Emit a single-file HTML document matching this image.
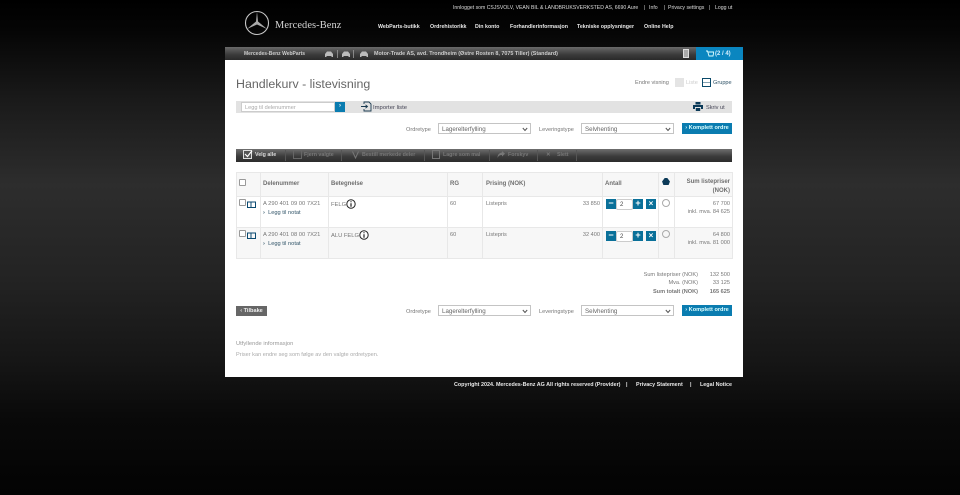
<!DOCTYPE html>
<html><head><meta charset="utf-8"><style>
*{box-sizing:border-box}
html,body{margin:0;padding:0}
body{width:960px;height:495px;overflow:hidden;position:relative;font-family:"Liberation Sans",sans-serif;background:linear-gradient(180deg,#000 0,#050505 30px,#1a1a1a 100px,#2d2d2d 185px,#232323 280px,#161616 360px,#090909 420px,#030303 495px)}
#p{position:absolute;left:0;top:0;width:960px;height:495px;filter:blur(.35px)}
.a{position:absolute;white-space:nowrap}
.w{color:#e8e8e8;font-size:5.3px;font-weight:bold}
.g{color:#777;font-size:5.6px;margin-top:1px}
.sel{position:absolute;height:11px;background:#fff;border:1px solid #c4c4c4;font-size:6.2px;color:#666;padding:2px 0 0 3px;line-height:7px}
.sel svg{position:absolute;right:2px;top:3px}
.blue{position:absolute;background:#0a7cb0;color:#dff;font-size:5.6px;font-weight:bold;text-align:center}
.q{position:absolute;width:10px;height:10px;background:#0a7099;color:#fff;font-size:9px;line-height:9px;font-weight:bold;text-align:center}
.cb{position:absolute;width:7px;height:7px;border:1px solid #999;background:#fff;border-radius:1px}
.bt{color:#777;font-size:5.3px;font-weight:bold;margin-top:1px}
.hd{color:#6f6f6f;font-size:6px;font-weight:bold;margin-top:1px}
.v{position:absolute;width:1px;background:#e8e8e8}
.h{position:absolute;height:1px;background:#e8e8e8;left:236px;width:496px}
.s{position:absolute;top:150px;width:1px;height:11px;background:#555}
.inp{position:absolute;width:17px;height:11px;background:#fff;border:1px solid #ccc;border-radius:2px;font-size:6px;color:#444;padding:1px 0 0 3px;line-height:8px}
</style></head><body><div id="p">

<svg class="a" style="left:244px;top:10px" width="26" height="26" viewBox="0 0 26 26" fill="none" stroke="#c8c8c8"><circle cx="13" cy="13" r="11.5" stroke-width="1.1"/><path d="M13 1.5 14 11.5 23 19 13 14.5 3 19 12 11.5Z" fill="#aaa" stroke="none"/></svg>
<div class="a" style="left:275px;top:20px;font:10.4px 'Liberation Serif',serif;color:#d5d5d5;letter-spacing:.1px">Mercedes-Benz</div>

<div class="a" style="left:453px;top:5px;font-size:5.15px;color:#ddd;line-height:7px">Innlogget som CSJSVOLV, VEAN BIL &amp; LANDBRUKSVERKSTED AS, 6690 Aure</div>
<div class="a" style="left:644px;top:5px;font-size:5px;color:#ddd;line-height:7px">|</div>
<div class="a" style="left:649px;top:5px;font-size:5.2px;color:#ddd;line-height:7px">Info</div>
<div class="a" style="left:664px;top:5px;font-size:5px;color:#ddd;line-height:7px">|</div>
<div class="a" style="left:668px;top:5px;font-size:5.2px;color:#ddd;line-height:7px">Privacy settings</div>
<div class="a" style="left:709px;top:5px;font-size:5px;color:#ddd;line-height:7px">|</div>
<div class="a" style="left:715px;top:5px;font-size:5.2px;color:#ddd;line-height:7px">Logg ut</div>

<div class="a w" style="left:378px;top:23px;line-height:8px">WebParts-butikk</div>
<div class="a w" style="left:430px;top:23px;line-height:8px">Ordrehistorikk</div>
<div class="a w" style="left:475px;top:23px;line-height:8px">Din konto</div>
<div class="a w" style="left:510px;top:23px;line-height:8px">Forhandlerinformasjon</div>
<div class="a w" style="left:577px;top:23px;line-height:8px">Tekniske opplysninger</div>
<div class="a w" style="left:644px;top:23px;line-height:8px">Online Help</div>

<!-- top bar -->
<div class="a" style="left:225px;top:47px;width:517px;height:13px;background:linear-gradient(180deg,#6a6a6a,#3a3a3a 60%,#2a2a2a)"></div>
<div class="a" style="left:244px;top:51px;font-size:5px;font-weight:bold;color:#ccc;line-height:7px">Mercedes-Benz WebParts</div>
<svg class="a" style="left:324px;top:50px" width="46" height="8" viewBox="0 0 46 8" fill="#bbb"><path d="M1 7V4L3 1.5H7L9 4V7H7.500V6H2.500V7Z"/><rect x="13" y="0" width=".8" height="8" fill="#999"/><path d="M18 7V4L20 1.500H24L26 4V7H24.500V6H19.500V7Z"/><rect x="29" y="0" width=".8" height="8" fill="#999"/><path d="M36 7V4L38 1.500H42L44 4V7H42.500V6H37.500V7Z"/></svg>
<div class="a" style="left:374px;top:51px;font-size:5.4px;font-weight:bold;color:#ccc;line-height:7px">Motor-Trade AS, avd. Trondheim (Østre Rosten 8, 7075 Tiller) (Standard)</div>
<div class="a" style="left:683px;top:49px;width:6px;height:9px;background:#aaa;border:1px solid #ddd"></div>
<div class="a" style="left:696px;top:47px;width:47px;height:13px;background:#0a86c0"></div>
<svg class="a" style="left:706px;top:50px" width="8" height="8" viewBox="0 0 8 8" fill="none" stroke="#dff" stroke-width=".9"><path d="M0 1H1.500L3 6H7L7.800 2H2"/></svg>
<div class="a" style="left:715px;top:51px;font-size:6px;font-weight:bold;color:#d5f0ff;line-height:7px">(2 / 4)</div>

<!-- main -->
<div class="a" style="left:225px;top:60px;width:518px;height:317px;background:#fff"></div>
<div class="a" style="left:236px;top:76px;font-size:12.4px;color:#666;line-height:17px">Handlekurv - listevisning</div>

<div class="a g" style="left:635px;top:78px;line-height:8px">Endre visning</div>
<div class="a" style="left:675px;top:78px;width:9px;height:9px;background:#e4e4e4"></div>
<div class="a g" style="left:686px;top:78px;color:#ccc;line-height:8px">Liste</div>
<div class="a" style="left:702px;top:78px;width:9px;height:9px;border:1px solid #0b4a6a;background:linear-gradient(#fff 40%,#0b4a6a 40%,#0b4a6a 50%,#fff 50%)"></div>
<div class="a g" style="left:713px;top:78px;color:#33566a;line-height:8px">Gruppe</div>

<div class="a" style="left:236px;top:101px;width:496px;height:12px;background:#e2e2e2"></div>
<div class="a" style="left:241px;top:102px;width:94px;height:10px;background:#fff;border:1px solid #ccc;font-size:5.6px;color:#aaa;padding:2px 0 0 3px;line-height:6px">Legg til delenummer</div>
<div class="a" style="left:335px;top:102px;width:10px;height:10px;background:#0a7cb0;color:#fff;font-size:6px;text-align:center;line-height:9px;font-weight:bold">›</div>
<svg class="a" style="left:361px;top:101px" width="11" height="11" viewBox="0 0 11 11" fill="none" stroke="#1a3a50" stroke-width=".9"><path d="M3 3V1H8L10 3V10H3V8"/><path d="M0 5.500H6M4.500 3.800 6.500 5.500 4.500 7.200"/></svg>
<div class="a g" style="left:373px;top:102.500px;color:#445;line-height:8px;font-size:5.9px">Importer liste</div>
<svg class="a" style="left:693px;top:102px" width="10" height="9" viewBox="0 0 10 9" fill="#0b3a58"><path d="M2.500 0H7.500V2.500H2.500ZM0 3H10V7H8V5H2V7H0ZM2.800 6H7.200V9H2.800Z"/></svg>
<div class="a g" style="left:706px;top:102.500px;color:#445;line-height:8px">Skriv ut</div>

<!-- order row 1 -->
<div class="a g" style="left:406px;top:124.500px;line-height:8px">Ordretype</div>
<div class="sel" style="left:438px;top:123px;width:93px">Lagerelterfylling<svg width="6" height="5" viewBox="0 0 6 5" fill="none" stroke="#555"><path d="M.8 1 3 3.500 5.200 1"/></svg></div>
<div class="a g" style="left:539px;top:124.500px;line-height:8px">Leveringstype</div>
<div class="sel" style="left:581px;top:123px;width:93px">Selvhenting<svg width="6" height="5" viewBox="0 0 6 5" fill="none" stroke="#555"><path d="M.8 1 3 3.500 5.200 1"/></svg></div>
<div class="blue" style="left:682px;top:123px;width:50px;height:11px;line-height:11px">› Komplett ordre</div>

<!-- toolbar -->
<div class="a" style="left:236px;top:149px;width:496px;height:12.500px;background:linear-gradient(180deg,#6e6e6e,#3c3c3c 55%,#2c2c2c)"></div>
<div class="a" style="left:243px;top:150px;width:9px;height:9px;border:1px solid #ddd;background:#555"></div>
<svg class="a" style="left:244px;top:150px" width="9" height="8" viewBox="0 0 9 8" fill="none" stroke="#fff" stroke-width="1.200"><path d="M1 4 3.500 6.500 8 .8"/></svg>
<div class="a" style="left:255px;top:152px;font-size:5.3px;font-weight:bold;color:#ddd;line-height:7px">Velg alle</div>
<div class="s" style="left:285px"></div>
<div class="a" style="left:293px;top:150px;width:9px;height:9px;border:1px solid #666"></div>
<div class="a bt" style="left:304px;top:151px;line-height:7px">Fjern valgte</div>
<div class="s" style="left:341px"></div>
<svg class="a" style="left:352px;top:151px" width="7" height="8" viewBox="0 0 7 8" fill="none" stroke="#777"><path d="M.5 .5 3.500 7 6.500 .5"/></svg>
<div class="a bt" style="left:362px;top:151px;line-height:7px">Bestill merkede deler</div>
<div class="s" style="left:424px"></div>
<div class="a" style="left:432px;top:150px;width:8px;height:9px;border:1px solid #777"></div>
<div class="a bt" style="left:443px;top:151px;line-height:7px">Lagre som mal</div>
<div class="s" style="left:489px"></div>
<svg class="a" style="left:497px;top:151px" width="8" height="7" viewBox="0 0 8 7" fill="#777"><path d="M5 0 8 2.800 5 5.500V4C3 4 1.500 4.500.5 7 .5 3.500 2.500 1.800 5 1.500Z"/></svg>
<div class="a bt" style="left:508px;top:151px;line-height:7px">Forskyv</div>
<div class="s" style="left:537px"></div>
<div class="a bt" style="left:546px;top:151px;line-height:7px">✕</div>
<div class="a bt" style="left:557px;top:151px;line-height:7px">Slett</div>
<div class="s" style="left:576px"></div>

<!-- table -->
<div class="a" style="left:236px;top:172px;width:496px;height:25px;background:#f7f7f7"></div>
<div class="a" style="left:236px;top:227px;width:496px;height:31px;background:#f7f7f7"></div>
<div class="h" style="top:172px"></div><div class="h" style="top:196px"></div><div class="h" style="top:227px"></div><div class="h" style="top:258px"></div>
<div class="v" style="left:236px;top:172px;height:87px"></div>
<div class="v" style="left:260px;top:172px;height:87px"></div>
<div class="v" style="left:328px;top:172px;height:87px"></div>
<div class="v" style="left:447px;top:172px;height:87px"></div>
<div class="v" style="left:482px;top:172px;height:87px"></div>
<div class="v" style="left:602px;top:172px;height:87px"></div>
<div class="v" style="left:658px;top:172px;height:87px"></div>
<div class="v" style="left:674px;top:172px;height:87px"></div>
<div class="v" style="left:732px;top:172px;height:87px"></div>

<div class="cb" style="left:239px;top:179px"></div>
<div class="a hd" style="left:263px;top:179px;line-height:8px">Delenummer</div>
<div class="a hd" style="left:331px;top:179px;line-height:8px">Betegnelse</div>
<div class="a hd" style="left:450px;top:179px;line-height:8px">RG</div>
<div class="a hd" style="left:486px;top:179px;line-height:8px">Prising (NOK)</div>
<div class="a hd" style="left:605px;top:179px;line-height:8px">Antall</div>
<svg class="a" style="left:662px;top:178px" width="8" height="7" viewBox="0 0 9 8" fill="#0b3a58"><path d="M3 0H6L9 4 7.500 8H1.500L0 4Z"/></svg>
<div class="a hd" style="left:676px;top:177px;width:54px;text-align:right;line-height:8.500px;white-space:normal">Sum listepriser (NOK)</div>

<!-- row 1 -->
<div class="cb" style="left:239px;top:199px"></div>
<svg class="a" style="left:247px;top:201px" width="9" height="7" viewBox="0 0 9 7" fill="none" stroke="#0b4a70"><path d="M.5 1H4V6.500H.5ZM4 1H8.500V6.500H4Z"/></svg>
<div class="a g" style="left:263px;top:199px;line-height:8px;font-size:5.8px">A 290 401 09 00 7X21</div>
<div class="a" style="left:263px;top:209px;font-size:5.7px;color:#33566a;line-height:8px"><b>›</b>&nbsp; Legg til notat</div>
<div class="a g" style="left:331px;top:200px;line-height:8px;font-size:5.8px">FELG</div>
<svg class="a" style="left:346px;top:199px" width="10" height="10" viewBox="0 0 10 10"><circle cx="5" cy="5" r="4.200" fill="#fff" stroke="#222" stroke-width="1"/><path d="M5 2.200V3.300M5 4.200V7.800" stroke="#222" stroke-width="1.200"/></svg>
<div class="a g" style="left:450px;top:199px;line-height:8px">60</div>
<div class="a g" style="left:486px;top:199px;line-height:8px">Listepris</div>
<div class="a g" style="left:560px;top:199px;width:40px;text-align:right;line-height:8px">33 850</div>
<div class="q" style="left:606px;top:199px">−</div><div class="inp" style="left:616px;top:199px">2</div><div class="q" style="left:633px;top:199px">+</div><div class="q" style="left:646px;top:199px;font-size:8px">×</div>
<div class="a" style="left:662px;top:199px;width:8px;height:8px;border:1px solid #aaa;border-radius:50%"></div>
<div class="a g" style="left:676px;top:199px;width:54px;text-align:right;line-height:8px">67 700</div>
<div class="a g" style="left:676px;top:207px;width:54px;text-align:right;line-height:8px">inkl. mva. 84 625</div>

<!-- row 2 -->
<div class="cb" style="left:239px;top:230px"></div>
<svg class="a" style="left:247px;top:232px" width="9" height="7" viewBox="0 0 9 7" fill="none" stroke="#0b4a70"><path d="M.5 1H4V6.500H.5ZM4 1H8.500V6.500H4Z"/></svg>
<div class="a g" style="left:263px;top:230px;line-height:8px;font-size:5.8px">A 290 401 08 00 7X21</div>
<div class="a" style="left:263px;top:240px;font-size:5.7px;color:#33566a;line-height:8px"><b>›</b>&nbsp; Legg til notat</div>
<div class="a g" style="left:331px;top:231px;line-height:8px;font-size:5.8px">ALU FELG</div>
<svg class="a" style="left:359px;top:230px" width="10" height="10" viewBox="0 0 10 10"><circle cx="5" cy="5" r="4.200" fill="#fff" stroke="#222" stroke-width="1"/><path d="M5 2.200V3.300M5 4.200V7.800" stroke="#222" stroke-width="1.200"/></svg>
<div class="a g" style="left:450px;top:230px;line-height:8px">60</div>
<div class="a g" style="left:486px;top:230px;line-height:8px">Listepris</div>
<div class="a g" style="left:560px;top:230px;width:40px;text-align:right;line-height:8px">32 400</div>
<div class="q" style="left:606px;top:231px">−</div><div class="inp" style="left:616px;top:231px">2</div><div class="q" style="left:633px;top:231px">+</div><div class="q" style="left:646px;top:231px;font-size:8px">×</div>
<div class="a" style="left:662px;top:230px;width:8px;height:8px;border:1px solid #aaa;border-radius:50%"></div>
<div class="a g" style="left:676px;top:230px;width:54px;text-align:right;line-height:8px">64 800</div>
<div class="a g" style="left:676px;top:238px;width:54px;text-align:right;line-height:8px">inkl. mva. 81 000</div>

<!-- totals -->
<div class="a g" style="left:620px;top:270px;width:78px;text-align:right;line-height:8px">Sum listepriser (NOK)</div>
<div class="a g" style="left:700px;top:270px;width:30px;text-align:right;line-height:8px">132 500</div>
<div class="a g" style="left:620px;top:278px;width:78px;text-align:right;line-height:8px">Mva. (NOK)</div>
<div class="a g" style="left:700px;top:278px;width:30px;text-align:right;line-height:8px">33 125</div>
<div class="a g" style="left:620px;top:287px;width:78px;text-align:right;line-height:8px;font-weight:bold">Sum totalt (NOK)</div>
<div class="a g" style="left:700px;top:287px;width:30px;text-align:right;line-height:8px;font-weight:bold">165 625</div>

<!-- order row 2 -->
<div class="a" style="left:236px;top:306px;width:31px;height:10px;background:#666;color:#eee;font-size:5.6px;font-weight:bold;text-align:center;line-height:10px">‹ Tilbake</div>
<div class="a g" style="left:406px;top:306.500px;line-height:8px">Ordretype</div>
<div class="sel" style="left:438px;top:305px;width:93px">Lagerelterfylling<svg width="6" height="5" viewBox="0 0 6 5" fill="none" stroke="#555"><path d="M.8 1 3 3.500 5.200 1"/></svg></div>
<div class="a g" style="left:539px;top:306.500px;line-height:8px">Leveringstype</div>
<div class="sel" style="left:581px;top:305px;width:93px">Selvhenting<svg width="6" height="5" viewBox="0 0 6 5" fill="none" stroke="#555"><path d="M.8 1 3 3.500 5.200 1"/></svg></div>
<div class="blue" style="left:682px;top:305px;width:50px;height:11px;line-height:11px">› Komplett ordre</div>

<div class="a" style="left:236px;top:340px;font-size:5.8px;color:#999;line-height:8px">Utfyllende informasjon</div>
<div class="a" style="left:236px;top:351px;font-size:5.6px;color:#aaa;line-height:8px">Priser kan endre seg som følge av den valgte ordretypen.</div>

<!-- footer -->
<div class="a w" style="left:454px;top:381px;line-height:8px;font-size:5.4px">Copyright 2024. Mercedes-Benz AG All rights reserved (Provider)</div>
<div class="a w" style="left:626px;top:381px;line-height:8px">|</div>
<div class="a w" style="left:636px;top:381px;line-height:8px;font-size:5.4px">Privacy Statement</div>
<div class="a w" style="left:690px;top:381px;line-height:8px">|</div>
<div class="a w" style="left:700px;top:381px;line-height:8px;font-size:5.4px">Legal Notice</div>
</div></body></html>
